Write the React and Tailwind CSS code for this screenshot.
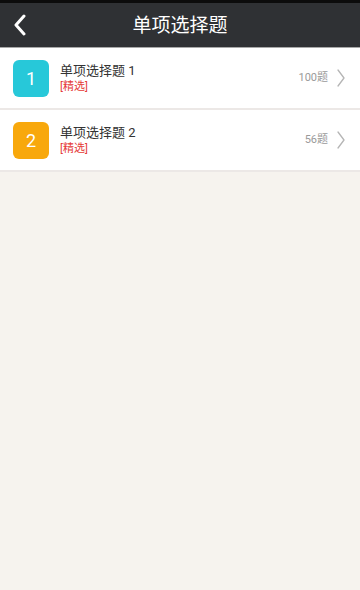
import React from 'react';

const items = [
  { no: 1, title: '单项选择题 1', count: '100题', color: 'bg-[#27c8d9]' },
  { no: 2, title: '单项选择题 2', count: '56题', color: 'bg-[#f8a80c]' },
];

const App = () => {
  return (
    <div
      className="w-[360px] h-[590px] flex flex-col bg-[#f6f3ee] overflow-hidden"
      style={{ fontFamily: 'Roboto, "Noto Sans CJK SC", sans-serif' }}
    >
      {/* Header */}
      <div className="h-[3px] bg-[#0c0c0c]" />
      <div className="relative h-[44px] bg-[#2f3134] flex items-center justify-center">
        <button className="absolute left-[10px] top-[10px] w-[20px] h-[24px] flex items-center justify-center">
          <svg width="14" height="22" viewBox="0 0 14 22" fill="none">
            <path d="M11 2 L3 11 L11 20" stroke="#fff" strokeWidth="3" strokeLinecap="round" strokeLinejoin="round" />
          </svg>
        </button>
        <h1 className="text-[19px] text-white leading-none">单项选择题</h1>
      </div>
      <div className="h-[1px] bg-[#a8a8a8]" />

      {/* List */}
      <div className="flex flex-col">
        {items.map(item => (
          <div key={item.no} className="flex flex-col">
            <div className="h-[60px] bg-white flex items-center pl-[13px] pr-[14px]">
              <div className={`w-[36px] h-[37px] rounded-[6px] ${item.color} flex items-center justify-center text-white text-[18px]`}>
                {item.no}
              </div>
              <div className="ml-[11px] flex-1 flex flex-col">
                <span className="text-[13px] text-[#333] leading-[16px]">{item.title}</span>
                <span className="text-[11px] text-[#e53935] leading-[14px] mt-[1px]">[精选]</span>
              </div>
              <span className="text-[11px] text-[#9a9a9a]">{item.count}</span>
              <svg className="ml-[8px]" width="10" height="20" viewBox="0 0 10 20" fill="none">
                <path d="M2 2 L8 10 L2 18" stroke="#b5b5b5" strokeWidth="1.3" strokeLinecap="round" strokeLinejoin="round" />
              </svg>
            </div>
            <div className="h-[2px] bg-[#ece8e6]" />
          </div>
        ))}
      </div>
    </div>
  );
};

export default App;
